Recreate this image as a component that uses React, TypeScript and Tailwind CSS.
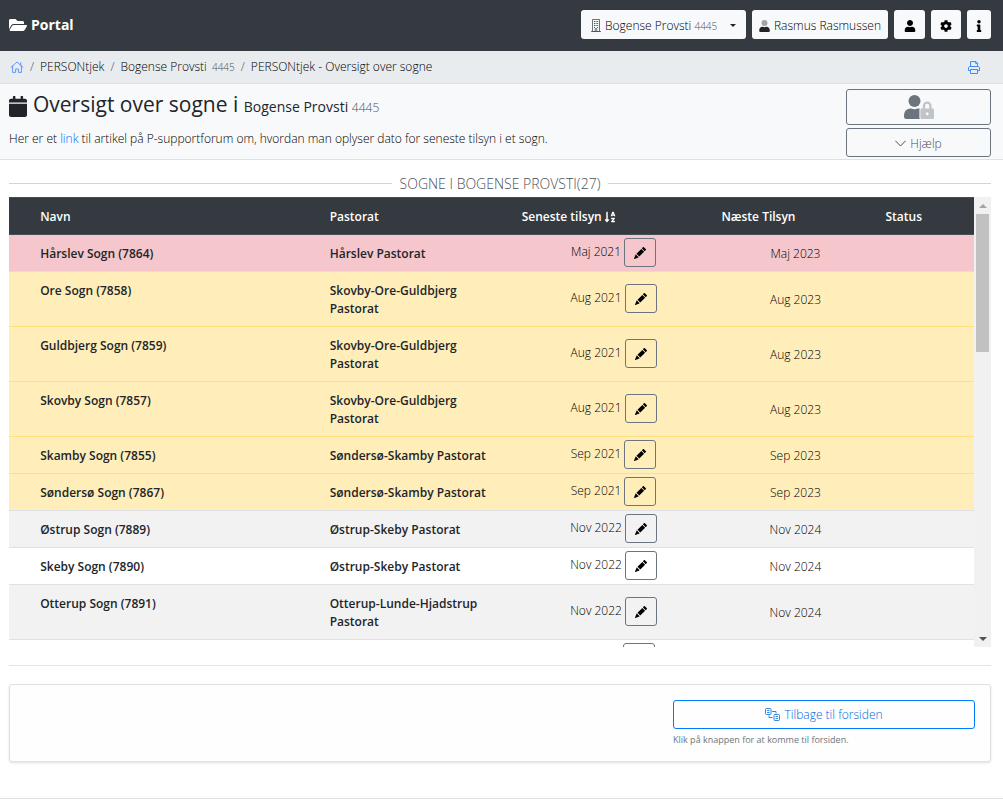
import { BsPencilFill } from 'react-icons/bs';
import { FaCog, FaFolderOpen, FaInfo, FaSortAlphaDown, FaUser } from 'react-icons/fa';

type RowTone = 'danger' | 'warning' | 'striped' | 'plain';

interface Parish {
  name: string;
  code: number;
  pastorate: string;
  lastVisit: string;
  nextVisit: string;
  tone: RowTone;
}

const PARISHES: Parish[] = [
  { name: 'Hårslev Sogn', code: 7864, pastorate: 'Hårslev Pastorat', lastVisit: 'Maj 2021', nextVisit: 'Maj 2023', tone: 'danger' },
  { name: 'Ore Sogn', code: 7858, pastorate: 'Skovby-Ore-Guldbjerg Pastorat', lastVisit: 'Aug 2021', nextVisit: 'Aug 2023', tone: 'warning' },
  { name: 'Guldbjerg Sogn', code: 7859, pastorate: 'Skovby-Ore-Guldbjerg Pastorat', lastVisit: 'Aug 2021', nextVisit: 'Aug 2023', tone: 'warning' },
  { name: 'Skovby Sogn', code: 7857, pastorate: 'Skovby-Ore-Guldbjerg Pastorat', lastVisit: 'Aug 2021', nextVisit: 'Aug 2023', tone: 'warning' },
  { name: 'Skamby Sogn', code: 7855, pastorate: 'Søndersø-Skamby Pastorat', lastVisit: 'Sep 2021', nextVisit: 'Sep 2023', tone: 'warning' },
  { name: 'Søndersø Sogn', code: 7867, pastorate: 'Søndersø-Skamby Pastorat', lastVisit: 'Sep 2021', nextVisit: 'Sep 2023', tone: 'warning' },
  { name: 'Østrup Sogn', code: 7889, pastorate: 'Østrup-Skeby Pastorat', lastVisit: 'Nov 2022', nextVisit: 'Nov 2024', tone: 'striped' },
  { name: 'Skeby Sogn', code: 7890, pastorate: 'Østrup-Skeby Pastorat', lastVisit: 'Nov 2022', nextVisit: 'Nov 2024', tone: 'plain' },
  { name: 'Otterup Sogn', code: 7891, pastorate: 'Otterup-Lunde-Hjadstrup Pastorat', lastVisit: 'Nov 2022', nextVisit: 'Nov 2024', tone: 'striped' },
];

// The first row sits straight under the header and carries no top border
const TONE_CLASSES: Record<RowTone, string> = {
  danger: 'bg-[#f5c6cb]',
  warning: 'bg-[#ffeeba] border-t border-[#ffdf7e]',
  striped: 'bg-[#f2f2f2] border-t border-[#dee2e6]',
  plain: 'bg-white border-t border-[#dee2e6]',
};

function BuildingIcon() {
  return (
    <svg viewBox="0 0 10 13" className="h-[13px] w-[10px] shrink-0" fill="none" stroke="#495057" aria-hidden="true">
      <path d="M1.5.5h7v12h-7zM0 12.5h10" strokeWidth="0.8" />
      <path d="M3 2.5h1M4.6 2.5h1M6.2 2.5h1M3 4.5h1M4.6 4.5h1M6.2 4.5h1M3 6.5h1M4.6 6.5h1M6.2 6.5h1M3 8.5h1M6.2 8.5h1" />
      <path d="M4.2 12.5V9.6h1.6v2.9" strokeWidth="0.8" />
    </svg>
  );
}

// Two-tone user: faded head above solid shoulders
function UserIcon() {
  return (
    <svg viewBox="0 0 448 512" className="h-3 w-[11px] shrink-0" fill="#212529" aria-hidden="true">
      <circle cx="224" cy="128" r="128" opacity="0.4" />
      <path d="M313.6 288h-16.7c-22.2 10.200-46.900 16-72.900 16s-50.600-5.800-72.900-16h-16.700C60.200 288 0 348.200 0 422.400V464c0 26.500 21.500 48 48 48h352c26.500 0 48-21.500 48-48v-41.600c0-74.200-60.200-134.400-134.400-134.400z" />
    </svg>
  );
}

function HomeIcon() {
  return (
    <svg viewBox="0 0 14 12" className="h-3 w-[14px]" fill="none" stroke="currentColor" strokeWidth="0.9" strokeLinecap="round" strokeLinejoin="round" aria-hidden="true">
      <path d="M1 6.300L7 1l6 5.300M10.800 4.200V1.600" />
      <path d="M2.600 5.200v6.200h3V8h2.800v3.400h3V5.200" />
    </svg>
  );
}

function PrintIcon() {
  return (
    <svg viewBox="0 0 12 13" className="h-[13px] w-3" fill="none" stroke="currentColor" strokeWidth="0.9" strokeLinejoin="round" aria-hidden="true">
      <path d="M2.500 5.500V.6h5.500l1.500 1.500v3.400M7.700.7v1.700h1.700" />
      <path d="M2.500 9.500h-2V7c0-.8.600-1.500 1.500-1.500h8c.9 0 1.500.7 1.500 1.500v2.500h-2" />
      <path d="M2.500 8.500h7v4h-7z" />
    </svg>
  );
}

function CalendarIcon() {
  return (
    <svg viewBox="0 0 18 21" className="h-[21px] w-[18px] shrink-0" fill="#212529" aria-hidden="true">
      <path d="M0 6.500V4.600C0 3.500.8 2.700 1.900 2.700h2V.5c0-.3.200-.5.500-.5h1.500c.3 0 .5.200.5.500v2.200h5.200V.5c0-.3.200-.5.500-.5h1.500c.3 0 .5.200.5.500v2.200h2c1.100 0 1.900.8 1.900 1.900v1.900zM0 7.800h18v11.300c0 1.100-.8 1.900-1.900 1.900H1.900C.8 21 0 20.200 0 19.100z" />
    </svg>
  );
}

function UserLockIcon() {
  return (
    <svg viewBox="0 0 30 24" className="h-6 w-[30px]" fill="#6c757d" aria-hidden="true">
      <circle cx="10.500" cy="6" r="6" />
      <path d="M6.500 13.500h.8a8 8 0 0 0 6.400 0h1c.4 0 .8 0 1.100.2-.3.400-.4.900-.4 1.400v7.300c0 .6.200 1.100.5 1.600H2.200A2.200 2.200 0 0 1 0 21.800v-2a6.400 6.400 0 0 1 6.500-6.300z" />
      <path
        opacity="0.4"
        fillRule="evenodd"
        d="M28.500 13.500h-.9v-2.600a4.400 4.400 0 0 0-8.800 0v2.600h-.9c-.8 0-1.500.7-1.500 1.500v7.500c0 .8.700 1.500 1.500 1.500h10.600c.8 0 1.500-.7 1.500-1.500V15c0-.8-.7-1.500-1.500-1.500zM23.200 20.300a1.500 1.500 0 1 1 0-3 1.500 1.500 0 0 1 0 3zM25.300 13.500h-4.200v-2.600a2.100 2.100 0 0 1 4.200 0z"
      />
    </svg>
  );
}

function ChevronIcon() {
  return (
    <svg viewBox="0 0 11 7" className="h-[7px] w-[11px]" fill="none" stroke="currentColor" strokeLinecap="round" aria-hidden="true">
      <path d="M.6 1l4.900 5 4.900-5" />
    </svg>
  );
}

function LinkedBoxesIcon() {
  return (
    <svg viewBox="0 0 15 13" className="h-[13px] w-[15px]" fill="none" stroke="currentColor" strokeWidth="0.8" aria-hidden="true">
      <rect x="0.500" y="0.500" width="5.500" height="6" rx="1" />
      <rect x="9" y="6.500" width="5.500" height="6" rx="1" />
      <path d="M2 2.500h2.500M2 4.500h2.500M10.500 8.500H13M10.500 10.500H13M7 3.500h4v2M4 7.500v2h3.500" />
    </svg>
  );
}

function TopBar() {
  const button = 'flex h-[29px] items-center justify-center rounded-[3px] bg-[#f8f9fa]';

  return (
    <header className="flex h-[51px] items-center justify-between bg-[#343a40] pr-3 pb-0.5 pl-[9px]">
      <a href="#" className="flex items-center gap-1 text-[14px] font-bold text-white">
        <FaFolderOpen className="h-4 w-[18px]" />
        Portal
      </a>
      <div className="flex gap-1.5">
        <button type="button" className={`${button} w-[165px] gap-1 px-[10px] pt-0.5`}>
          <BuildingIcon />
          <span className="whitespace-nowrap">
            Bogense Provsti <small className="text-[10px] text-[#495057]">4445</small>
          </span>
          <span className="ml-auto border-x-[3px] border-t-[3px] border-x-transparent border-t-[#212529]" />
        </button>
        <button type="button" className={`${button} w-[136px] gap-1 pt-0.5 whitespace-nowrap`}>
          <UserIcon />
          Rasmus Rasmussen
        </button>
        <button type="button" aria-label="Profil" className={`${button} w-[31px] pt-0.5`}>
          <FaUser className="size-3" />
        </button>
        <button type="button" aria-label="Indstillinger" className={`${button} w-[30px] pt-0.5`}>
          <FaCog className="size-3" />
        </button>
        <button type="button" aria-label="Information" className={`${button} w-6 pt-0.5`}>
          <FaInfo className="size-3" />
        </button>
      </div>
    </header>
  );
}

function Breadcrumb() {
  return (
    <nav aria-label="Brødkrumme" className="flex h-[33px] items-center justify-between border-b border-[#dee2e6] bg-[#e9ecef] pr-[23px] pl-[10px]">
      <ol className="flex items-center gap-1.5">
        <li>
          <a href="#" aria-label="Forside" className="block text-[#4d8dff]">
            <HomeIcon />
          </a>
        </li>
        <li className="text-[#495057]">/</li>
        <li><a href="#">PERSONtjek</a></li>
        <li className="text-[#495057]">/</li>
        <li>
          <a href="#">Bogense Provsti <small className="ml-0.5 text-[10px] text-[#495057]">4445</small></a>
        </li>
        <li className="text-[#495057]">/</li>
        <li>PERSONtjek - Oversigt over sogne</li>
      </ol>
      <button type="button" aria-label="Udskriv" className="text-[#2f80ff]">
        <PrintIcon />
      </button>
    </nav>
  );
}

function PageHeading() {
  return (
    <section className="flex justify-between border-b border-[#dee2e6] bg-[#f8f9fa] pt-[5px] pr-3 pb-0.5 pl-[9px]">
      <div>
        <h1 className="flex h-[34px] items-center gap-[6px] text-[21px] font-medium text-[#212529]">
          <CalendarIcon />
          <span>
            Oversigt over sogne i{' '}
            <span className="text-[14px]">
              Bogense Provsti <small className="text-[12px] font-light text-[#495057]">4445</small>
            </span>
          </span>
        </h1>
        <p className="mt-[7px]">
          Her er et <a href="#" className="text-[#0069ff]">link</a> til artikel på P-supportforum om, hvordan man oplyser dato for seneste tilsyn i et sogn.
        </p>
      </div>
      <div className="flex w-[145px] flex-col gap-[3px] text-[#495057]">
        <button type="button" aria-label="Adgang" className="flex h-9 items-center justify-center rounded-[3px] border border-[#6c757d]">
          <UserLockIcon />
        </button>
        <button type="button" className="flex h-[29px] items-center justify-center gap-1 rounded-[3px] border border-[#6c757d] pt-0.5">
          <ChevronIcon />
          Hjælp
        </button>
      </div>
    </section>
  );
}

function ParishRow({ parish }: { parish: Parish }) {
  const cell = TONE_CLASSES[parish.tone];

  return (
    <tr>
      <td className={cell} />
      <th scope="row" className={`${cell} px-2 pt-[10px] pb-2 text-left align-top font-semibold text-[#212529]`}>
        {parish.name} ({parish.code})
      </th>
      <td className={`${cell} px-2 pt-[10px] pb-2 align-top font-semibold text-[#212529]`}>{parish.pastorate}</td>
      <td className={`${cell} pt-[3px] pb-1`}>
        <div className="flex justify-center gap-[3px]">
          <span className="pt-[5px]">{parish.lastVisit}</span>
          <button
            type="button"
            aria-label={`Rediger ${parish.name}`}
            className="flex h-[29px] w-8 items-center justify-center rounded-[3px] border border-[#6c757d]"
          >
            <BsPencilFill className="size-3" />
          </button>
        </div>
      </td>
      <td className={`${cell} pt-0.5 text-center`}>{parish.nextVisit}</td>
      <td className={cell} />
    </tr>
  );
}

function ParishTable() {
  const head = 'border-t border-b border-[#454d55] px-2 pt-0.5 text-left font-semibold';

  return (
    <div className="flex h-[450px] overflow-hidden">
      <div className="min-w-0 flex-1 overflow-hidden">
        <table className="w-full table-fixed border-separate border-spacing-0">
          <colgroup>
            <col className="w-[2.4%]" />
            <col className="w-[30%]" />
            <col className="w-[19.9%]" />
            <col className="w-[20.7%]" />
            <col className="w-[17%]" />
            <col />
          </colgroup>
          <thead className="bg-[#343a40] text-white">
            <tr className="h-[38px]">
              <td className={head} />
              <th scope="col" className={head}>Navn</th>
              <th scope="col" className={head}>Pastorat</th>
              <th scope="col" className={head}>
                <span className="flex items-center gap-0.5">
                  Seneste tilsyn
                  <FaSortAlphaDown className="size-3" />
                </span>
              </th>
              <th scope="col" className={head}>Næste Tilsyn</th>
              <th scope="col" className={head}>Status</th>
            </tr>
          </thead>
          <tbody>
            {PARISHES.map(parish => (
              <ParishRow key={parish.code} parish={parish} />
            ))}
            {/* Next row, only its top edge is in view */}
            <tr>
              <td colSpan={3} className="border-t border-[#dee2e6]" />
              <td className="border-t border-[#dee2e6] pt-[3px] pb-1">
                <div className="flex justify-center gap-[3px]">
                  <span className="w-12" />
                  <button type="button" aria-label="Rediger" className="h-[29px] w-8 rounded-[3px] border border-[#6c757d]" />
                </div>
              </td>
              <td colSpan={2} className="border-t border-[#dee2e6]" />
            </tr>
          </tbody>
        </table>
      </div>
      {/* Scrollbar */}
      <div className="flex w-[17px] flex-col items-center bg-[#f1f1f1]">
        <div className="flex h-[17px] items-center">
          <span className="border-x-4 border-b-4 border-x-transparent border-b-[#a3a3a3]" />
        </div>
        <div className="h-[138px] w-[13px] bg-[#c1c1c1]" />
        <div className="mt-auto flex h-[17px] items-center">
          <span className="border-x-4 border-t-4 border-x-transparent border-t-[#505050]" />
        </div>
      </div>
    </div>
  );
}

export default function App() {
  return (
    <div className="bg-white font-['Open_Sans','Noto_Sans',sans-serif] text-[12px] leading-[18px] font-light text-black">
      <TopBar />
      <Breadcrumb />
      <PageHeading />
      <main className="pr-3 pl-[9px]">
        <h2 className="flex h-[37px] items-center gap-2 pt-[10px] text-[14px] text-[#495057]">
          <span className="h-px flex-1 bg-[#ced4da]" />
          <span>
            SOGNE I BOGENSE PROVSTI(27)
          </span>
          <span className="h-px flex-1 bg-[#ced4da]" />
        </h2>
        <ParishTable />
        <hr className="my-[18px] border-[#e2e3e5]" />
        <div className="flex justify-end rounded-[3px] border border-[#dee2e6] bg-[#fefefe] px-[15px] pt-[15px] pb-3 shadow-sm">
          <div className="w-[302px]">
            <button type="button" className="flex h-[29px] w-full items-center justify-center gap-1 rounded-[3px] border border-[#007bff] text-[#0069e0]">
              <LinkedBoxesIcon />
              Tilbage til forsiden
            </button>
            <p className="mt-0.5 text-[9px] font-normal text-[#6c757d]">Klik på knappen for at komme til forsiden.</p>
          </div>
        </div>
      </main>
      <footer className="mt-9 border-t border-[#dee2e6]" />
    </div>
  );
}
